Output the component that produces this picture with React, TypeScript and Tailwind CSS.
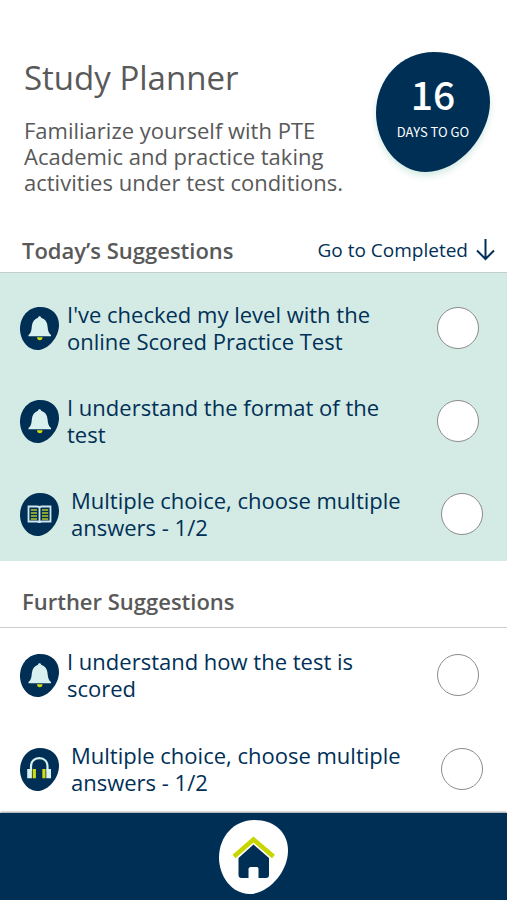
import { useState, type ReactNode } from "react";

type IconName = "bell" | "book" | "headphones";

interface Task {
  id: string;
  icon: IconName;
  title: string;
}

const todayTasks: Task[] = [
  { id: "level", icon: "bell", title: "I've checked my level with the online Scored Practice Test" },
  { id: "format", icon: "bell", title: "I understand the format of the test" },
  { id: "reading", icon: "book", title: "Multiple choice, choose multiple answers - 1/2" },
];

const furtherTasks: Task[] = [
  { id: "scoring", icon: "bell", title: "I understand how the test is scored" },
  { id: "listening", icon: "headphones", title: "Multiple choice, choose multiple answers - 1/2" },
];

function Blob({ className }: { className: string }) {
  return (
    <svg viewBox="0 0 114 120" preserveAspectRatio="none" className={className} aria-hidden="true">
      <path
        fill="currentColor"
        d="M58 0C93 0 114 21 114 50C114 83 83 120 50 120C21 120 0 91 0 61C0 27 25 0 58 0Z"
      />
    </svg>
  );
}

const glyphs: Record<IconName, ReactNode> = {
  bell: (
    <>
      <path
        fill="#d8f0ee"
        d="M19.500 9.300C20.500 9.300 21 10 21.200 10.800C25 12 27.200 15 27.600 19.500C27.900 23.500 28.500 26 31 28V29.300H8.500V28C11 26 11.500 23.500 11.800 19.500C12.200 15 14.500 12 18 10.800C18.200 10 18.500 9.300 19.500 9.300Z"
      />
      <path fill="#d2db0e" d="M17 30.300H22.500C22.500 32 21.500 33.300 19.800 33.300S17 32 17 30.300Z" />
    </>
  ),
  book: (
    <>
      <path
        fill="none"
        stroke="#cfe6ec"
        strokeWidth="1.800"
        d="M8.500 13.500H17C18.500 13.500 19.500 14.200 19.500 15C19.500 14.200 20.500 13.500 22 13.500H30.500V28.500H22C20.500 28.500 19.500 29 19.500 30C19.500 29 18.500 28.500 17 28.500H8.500ZM19.500 15V29"
      />
      <path
        stroke="#b5c928"
        strokeWidth="1.700"
        d="M10.800 17H17M10.800 20H17M10.800 23H17M10.800 26H17M22 17H28.200M22 20H28.200M22 23H28.200M22 26H28.200"
      />
    </>
  ),
  headphones: (
    <>
      <path
        fill="none"
        stroke="#d8f0ee"
        strokeWidth="2.200"
        d="M11 23V18.500C11 13.500 14 10.200 19.200 10.200S27.500 13.500 27.500 18.500V23"
      />
      <path fill="#d8f0ee" d="M7.200 21H11.900V30.300H7.200ZM26.300 21H31V30.300H26.300Z" />
      <path fill="#d2db0e" d="M12.700 21H15.900V30.300H12.700ZM22.300 21H25.500V30.300H22.300Z" />
    </>
  ),
};

function TaskIcon({ name }: { name: IconName }) {
  return (
    <span className="relative h-[43px] w-[39px] shrink-0">
      <Blob className="size-full text-[#002f55]" />
      <svg viewBox="0 0 39 43" className="absolute inset-0 size-full" aria-hidden="true">
        {glyphs[name]}
      </svg>
    </span>
  );
}

function TaskRow({ task }: { task: Task }) {
  const [done, setDone] = useState(false);
  const indented = task.icon !== "bell";
  return (
    <li>
      <label className={`flex items-center pl-5 ${indented ? "gap-3 pr-6" : "gap-2 pr-7"}`}>
        <TaskIcon name={task.icon} />
        <span className="flex-1 pr-5 text-[22px] leading-[27px]">{task.title}</span>
        <input
          type="checkbox"
          checked={done}
          onChange={(event) => setDone(event.target.checked)}
          className="size-[42px] shrink-0 appearance-none rounded-full border border-[#8c8c8c] bg-white checked:bg-[#002f55]"
        />
      </label>
    </li>
  );
}

export default function App() {
  return (
    <div className="flex min-h-screen flex-col bg-white font-['Open_Sans',sans-serif] text-[#003057]">
      <header className="flex items-start justify-between pt-[52px] pr-[17px] pb-[41px] pl-6 text-[#595959]">
        <div className="pt-[3px]">
          <h1 className="text-[33px] leading-[46px]">Study Planner</h1>
          <p className="mt-4 max-w-[335px] text-[22px] leading-[26px]">
            Familiarize yourself with PTE Academic and practice taking activities under test conditions.
          </p>
        </div>
        <div className="relative h-[120px] w-[114px] shrink-0 text-white">
          <Blob className="absolute inset-0 size-full text-[#002f55] drop-shadow-[0_4px_3px_#d5ebe5]" />
          <div className="relative flex flex-col items-center pt-5 font-['Noto_Sans_CJK_JP',sans-serif]">
            <strong className="text-[39px] leading-[42px] font-medium">16</strong>
            <span className="mt-2 text-[13px] leading-5">DAYS TO GO</span>
          </div>
        </div>
      </header>

      <main>
        <section>
          <div className="flex items-center justify-between border-b border-[#c4cfcc] pr-3 pb-2 pl-[22px]">
            <h2 className="text-[22px] leading-7 font-semibold text-[#595959]">Today’s Suggestions</h2>
            <a href="#completed" className="flex items-center gap-2 text-[19px] leading-7">
              Go to Completed
              <svg viewBox="0 0 19 22" className="h-[22px] w-[19px]" fill="none" stroke="currentColor" strokeWidth="2" aria-hidden="true">
                <path d="M9.500 0V20M1 11.500L9.500 20L18 11.500" />
              </svg>
            </a>
          </div>
          <ul className="flex flex-col gap-[39px] bg-[#d4eae4] pt-7 pb-5">
            {todayTasks.map((task) => (
              <TaskRow key={task.id} task={task} />
            ))}
          </ul>
        </section>

        <section>
          <h2 className="border-b border-[#ccc] pt-[26px] pb-3 pl-[22px] text-[22px] leading-7 font-semibold text-[#595959]">
            Further Suggestions
          </h2>
          <ul className="flex flex-col gap-10 pt-5 pb-4">
            {furtherTasks.map((task) => (
              <TaskRow key={task.id} task={task} />
            ))}
          </ul>
        </section>
      </main>

      <nav className="sticky bottom-0 mt-auto flex justify-center bg-[#002f55] pt-[7px] pb-[6px] shadow-[0_-1px_2px_#999]">
        <a href="#home" aria-label="Home" className="relative h-[74px] w-[69px]">
          <Blob className="size-full text-white" />
          <svg viewBox="0 0 69 74" className="absolute inset-0 size-full" aria-hidden="true">
            <path
              fill="#002f55"
              d="M34.500 24.500L50 38V55C50 57 49 58 47 58H39.500V49C39.500 48 39 47 38 47H31.500C30.500 47 29.500 48 29.500 49V58H22.500C20.500 58 19.500 57 19.500 55V38Z"
            />
            <path fill="none" stroke="#c8d600" strokeWidth="4.500" d="M15 36.500L34.500 19.500L54.500 36.500" />
          </svg>
        </a>
      </nav>
    </div>
  );
}
